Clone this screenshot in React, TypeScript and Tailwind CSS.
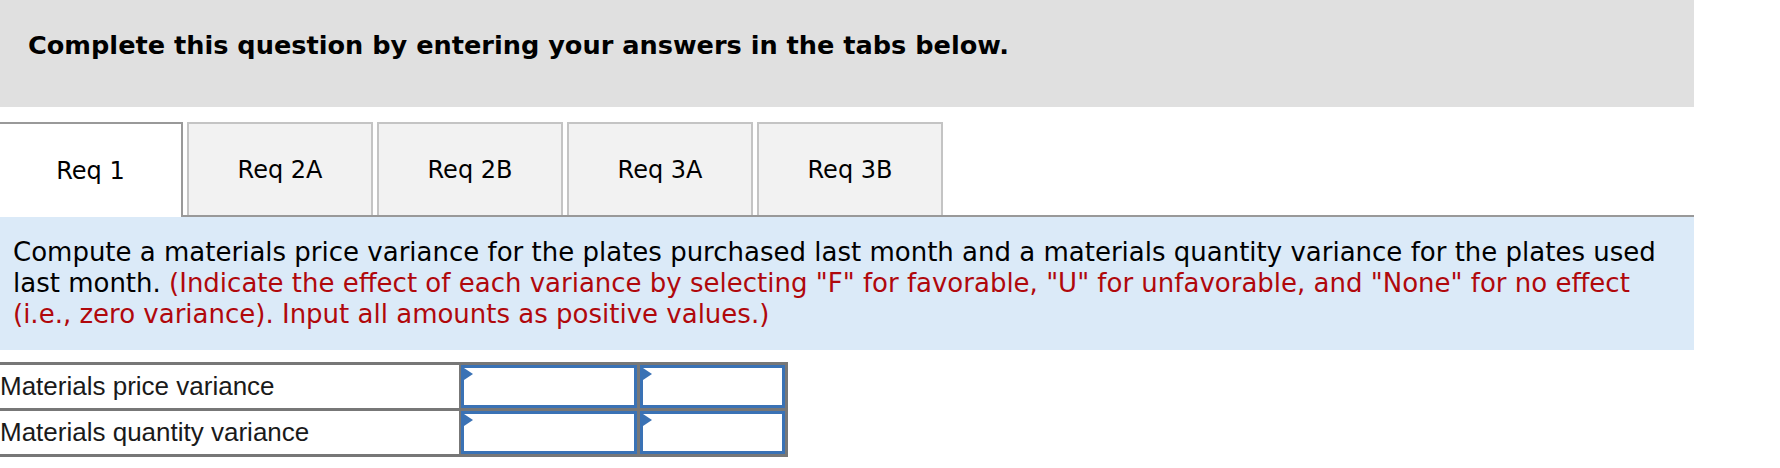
import React from "react";

const tabs = ["Req 2A", "Req 2B", "Req 3A", "Req 3B"];
const rows = ["Materials price variance", "Materials quantity variance"];

const InputBox: React.FC = () => (
  <div className="relative h-full w-full border-[3px] border-[#3a72b5] bg-white">
    <div className="absolute left-0 top-0 h-0 w-0 border-y-[6px] border-l-[9px] border-y-transparent border-l-[#3a72b5]" />
  </div>
);

export default function App() {
  return (
    <div className="h-[468px] w-[1780px] bg-white font-['DejaVu_Sans',sans-serif] text-black">
      <div className="w-[1694px]">
        <div className="flex h-[107px] items-center bg-[#e0e0e0] pb-[16px] pl-[28px]">
          <h2 className="text-[25.6px] font-bold">
            Complete this question by entering your answers in the tabs below.
          </h2>
        </div>

        <div className="mt-[15px] flex items-end border-b-2 border-[#999]">
          <div className="-mb-[2px] flex h-[95px] w-[183px] items-center justify-center border-t-2 border-r-2 border-[#999] bg-white text-[24px]">
            Req 1
          </div>
          <div className="ml-[4px] flex gap-[4px]">
            {tabs.map((t) => (
              <div
                key={t}
                className="flex h-[93px] w-[186px] items-center justify-center border-2 border-b-0 border-[#c4c4c4] bg-[#f2f2f2] text-[24px]"
              >
                {t}
              </div>
            ))}
          </div>
        </div>

        <div className="h-[133px] bg-[#dbeaf8] pl-[13px] pt-[20px] text-[26px] leading-[31px]">
          Compute a materials price variance for the plates purchased last month and a materials quantity variance for the plates used last month.{" "}
          <span className="text-[#b0080c]">
            (Indicate the effect of each variance by selecting "F" for favorable, "U" for unfavorable, and "None" for no effect (i.e., zero variance). Input all amounts as positive values.)
          </span>
        </div>
      </div>

      <div className="mt-[12px] w-[788px] border-t-[3px] border-[#777] font-['Liberation_Sans',Arial,sans-serif]">
        {rows.map((r) => (
          <div key={r} className="flex h-[46px] border-b-[3px] border-[#777]">
            <div className="flex w-[461px] items-center border-r-2 border-[#777] text-[26px] text-[#1a1a1a]">
              {r}
            </div>
            <div className="w-[179px] border-r-[3px] border-[#777]">
              <InputBox />
            </div>
            <div className="w-[148px] border-r-[3px] border-[#777]">
              <InputBox />
            </div>
          </div>
        ))}
      </div>
    </div>
  );
}
